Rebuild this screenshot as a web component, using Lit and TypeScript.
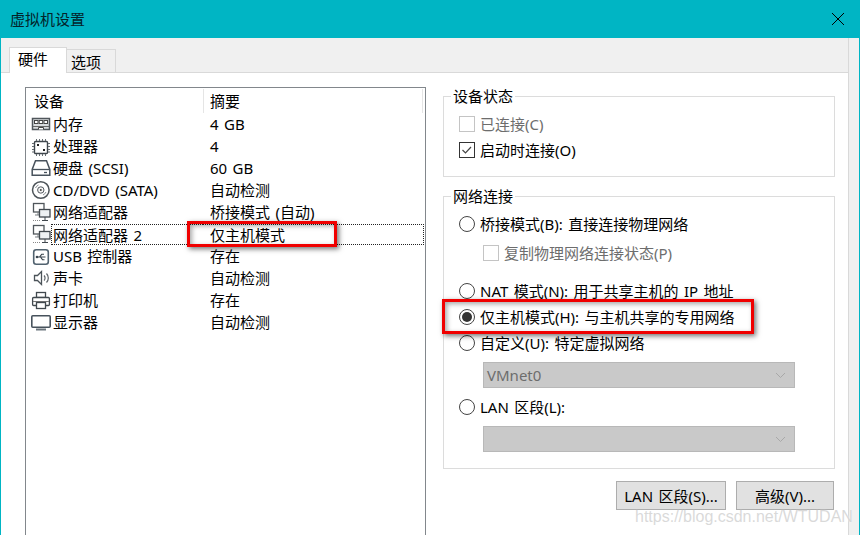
import { LitElement, html, css, svg } from "lit";
import { customElement } from "lit/decorators.js";

const ICONS: Record<string, unknown> = {
  mem: svg`<rect x="1.5" y="4.5" width="17" height="11" fill="#d9dcde" stroke="#50565b" stroke-width="1.5"/><rect x="3.5" y="6.5" width="3.5" height="3" fill="#fff" stroke="#444"/><rect x="8.2" y="6.5" width="3.5" height="3" fill="#fff" stroke="#444"/><rect x="13" y="6.5" width="3.5" height="3" fill="#fff" stroke="#444"/><path d="M2 12.5h16" stroke="#666"/><path d="M7.5 15.5v-2h5v2" fill="#fff" stroke="#444"/>`,
  cpu: svg`<rect x="3.5" y="5.5" width="13" height="12" rx="1" fill="#fff" stroke="#3f464c" stroke-width="1.4"/><path d="M5.5 3v2M8.5 3v2M11.5 3v2M14.5 3v2M5.5 18v2M8.5 18v2M11.5 18v2M14.5 18v2M1 7.5h2M1 10.5h2M1 13.5h2M1 16h2M17 7.5h2M17 10.5h2M17 13.5h2M17 16h2" stroke="#666c71"/><rect x="6" y="8" width="2" height="2" fill="#222"/><rect x="12" y="13" width="2" height="2" fill="#222"/>`,
  hdd: svg`<path d="M4.5 2.8h11l3.3 8.7v5.7H1.2v-5.7z" fill="#fff" stroke="#48525c" stroke-width="1.5"/><path d="M1.5 11.5h17" stroke="#48525c" stroke-width="1.3"/><path d="M13 14.5h3" stroke="#48525c" stroke-width="1.3"/>`,
  cd: svg`<circle cx="9.8" cy="10" r="8.3" fill="#fff" stroke="#4d5459" stroke-width="1.5"/><circle cx="9.8" cy="10" r="3.2" fill="#f4f4f4" stroke="#555b61"/><circle cx="9.8" cy="10" r="1" fill="#444"/><path d="M4.5 8a5.8 5.8 0 0 1 3-3M15 12a5.8 5.8 0 0 1-3 3" fill="none" stroke="#888e93"/>`,
  net: svg`<rect x="2.5" y="1.5" width="10.5" height="8.5" fill="#fff" stroke="#50565b" stroke-width="1.3"/><path d="M7 10v3M4 13h5" stroke="#777c81"/><rect x="8.5" y="7.5" width="10.5" height="7.5" fill="#eef1f3" stroke="#41484e" stroke-width="1.3"/><path d="M14 15v3.5M11 18.5h6" stroke="#41484e"/><path d="M2 18.5h7" stroke="#888" stroke-dasharray="1 1"/>`,
  usb: svg`<rect x="2.7" y="3.7" width="14.6" height="14.6" rx="2.5" fill="#fff" stroke="#51626f" stroke-width="1.6"/><path d="M5.5 11h9M8.5 11l2.2-2.7h2.3M9.5 11l2 2.7h2" fill="none" stroke="#3a454e" stroke-width="1.1"/><circle cx="6" cy="11" r="1.3" fill="#3a454e"/>`,
  snd: svg`<path d="M3.5 7.5h3l4-4v13l-4-4h-3z" fill="#fff" stroke="#4b5359" stroke-width="1.3"/><path d="M13 7.5a3.5 3.5 0 0 1 0 5M15.5 5.5a6.5 6.5 0 0 1 0 9" fill="none" stroke="#5d6368" stroke-width="1.2"/>`,
  prn: svg`<rect x="5.5" y="2.5" width="9" height="5" fill="#fff" stroke="#41484e" stroke-width="1.3"/><path d="M5 15.5H2.6a1 1 0 0 1-1-1V8.5a1 1 0 0 1 1-1h14.8a1 1 0 0 1 1 1v6a1 1 0 0 1-1 1H15" fill="#fff" stroke="#41484e" stroke-width="1.3"/><path d="M2 11.5h16" stroke="#777"/><rect x="5.5" y="12.5" width="9" height="6" fill="#fff" stroke="#41484e" stroke-width="1.3"/>`,
  mon: svg`<rect x="0.8" y="3.8" width="18.4" height="11.4" rx="1" fill="#fff" stroke="#47525c" stroke-width="1.6"/><path d="M5 17.5h10" stroke="#6c767e" stroke-width="2"/>`,
};

const DEVICES = [
  ["mem", "内存", "4 GB"],
  ["cpu", "处理器", "4"],
  ["hdd", "硬盘 (SCSI)", "60 GB"],
  ["cd", "CD/DVD (SATA)", "自动检测"],
  ["net", "网络适配器", "桥接模式 (自动)"],
  ["net", "网络适配器 2", "仅主机模式"],
  ["usb", "USB 控制器", "存在"],
  ["snd", "声卡", "自动检测"],
  ["prn", "打印机", "存在"],
  ["mon", "显示器", "自动检测"],
];

@customElement("app-root")
export class AppRoot extends LitElement {
  static styles = css`
    :host {
      display: block;
      position: relative;
      width: 860px;
      height: 535px;
      overflow: hidden;
      background: #fff;
      font: 15px/20px "Noto Sans", "Noto Sans CJK SC", sans-serif;
      word-spacing: 1.5px;
      color: #000;
    }
    .window { display: flex; flex-direction: column; height: 535px; border: solid #00b5c4; border-width: 0 1px; box-sizing: border-box; }
    .title { flex: 0 0 38px; margin: 0 -1px; padding-left: 10px; background: #00b5c4; display: flex; align-items: center; justify-content: space-between; color: #04242a; }
    .close { width: 14px; height: 14px; margin-right: 15px; }
    .body { flex: 1; display: flex; min-height: 0; }
    .main { flex: 1; display: flex; flex-direction: column; min-width: 0; }
    .side { flex: 0 0 11px; box-sizing: border-box; background: #f0f0f0; border-left: 1px solid #d9d9d9; }
    .tabs { flex: 0 0 35px; box-sizing: border-box; background: #f0f0f0; border-bottom: 1px solid #d9d9d9; display: flex; align-items: flex-end; padding-left: 8px; margin-right: -1px; }
    .tab { box-sizing: border-box; margin-bottom: -1px; border: 1px solid #d9d9d9; }
    .tab.on { width: 58px; height: 26px; background: #fff; border-bottom: 0; line-height: 22px; padding-left: 8px; }
    .tab.off { width: 50px; height: 24px; margin-left: -1px; border-left: 0; line-height: 24px; padding-left: 5px; }
    .content { flex: 1; display: flex; min-height: 0; padding: 14px 13px 0 24px; gap: 17px; }
    .list { flex: 0 0 401px; box-sizing: border-box; border: 1px solid #82878c; border-bottom: 0; }
    .head { height: 25px; display: grid; grid-template-columns: 177px 1fr; padding-top: 1px; box-sizing: border-box; }
    .head span { display: block; padding-left: 8px; line-height: 24px; }
    .head span + span { border-left: 1px solid #e5e5e5; border-right: 1px solid #e5e5e5; padding-left: 6px; margin-right: 2px; }
    .row { height: 22px; display: grid; grid-template-columns: 25px 152px 1fr; align-items: center; line-height: 22px; }
    .row svg { width: 20px; height: 20px; margin-left: 5px; display: block; }
    .name, .sum { white-space: nowrap; }
    .name { padding-left: 2px; }
    .sum { padding-left: 7px; }
    .row.sel .name, .row.sel .sum { height: 21px; line-height: 20px; box-sizing: border-box; border-top: 1px dotted #222; border-bottom: 1px dotted #222; }
    .row.sel .name { border-left: 1px dotted #222; padding-left: 1px; }
    .row.sel .sum { border-right: 1px dotted #222; margin-right: 1px; }
    .right { flex: 1; display: flex; flex-direction: column; margin-top: -1px; }
    fieldset { margin: 0; padding: 0 0 0 15px; border: 1px solid #dcdcdc; min-width: 0; box-sizing: border-box; }
    legend { padding: 0 2px; margin-left: -8px; line-height: 20px; }
    .status { height: 91px; margin-bottom: 9px; }
    .netg { height: 283px; }
    .stack { display: flex; flex-direction: column; padding-top: 5px; }
    .opt { height: 26px; display: flex; align-items: center; gap: 5px; white-space: nowrap; }
    .off-text { color: #6d6d6d; }
    .box { width: 16px; height: 16px; flex: none; box-sizing: border-box; border: 1px solid #333; background: #fff; display: block; }
    .box.dis { border-color: #c4c4c4; }
    .radio { width: 16px; height: 16px; flex: none; box-sizing: border-box; border: 1px solid #444; border-radius: 50%; background: #fff; display: grid; place-items: center; }
    .radio i { width: 10px; height: 10px; border-radius: 50%; background: #333; }
    .sub { padding-left: 24px; margin-top: 3px; }
    .combo { margin-left: 24px; width: 312px; height: 26px; box-sizing: border-box; background: #c9c9c9; border: 1px solid #b8b8b8; display: flex; align-items: center; justify-content: space-between; padding: 0 8px 0 3px; color: #6d6d6d; }
    .combo svg { width: 11px; height: 7px; }
    .gap-a { height: 12px; }
    .gap-b { height: 6px; }
    .buttons { display: flex; justify-content: flex-end; gap: 10px; margin: 12px 1px 0 0; }
    .btn { height: 29px; box-sizing: border-box; background: #e1e1e1; border: 1px solid #adadad; display: grid; place-items: center; white-space: nowrap; }
    .btn.a { width: 110px; }
    .btn.b { width: 98px; }
    .mark { position: absolute; border: 3px solid #f00000; box-sizing: border-box; box-shadow: 2px 2px 5px rgba(0,0,0,.55), inset 2px 2px 5px rgba(0,0,0,.35); pointer-events: none; }
    .mark.m1 { left: 187px; top: 221px; width: 150px; height: 26px; }
    .mark.m2 { left: 442px; top: 299px; width: 312px; height: 35px; }
    .wm { position: absolute; left: 635px; top: 507px; font: 16px/20px "Liberation Sans", sans-serif; word-spacing: 0; color: rgba(205,205,205,.75); text-shadow: 0 0 1px rgba(255,255,255,.9); white-space: nowrap; }
  `;

  private chevron() {
    return html`<svg viewBox="0 0 11 7"><path d="M1 1l4.5 4.5L10 1" fill="none" stroke="#a8a8a8"/></svg>`;
  }

  render() {
    return html`
      <div class="window">
        <div class="title">
          <span>虚拟机设置</span>
          <svg class="close" viewBox="0 0 14 14"><path d="M1 1l12 12M13 1L1 13" stroke="#000" fill="none"/></svg>
        </div>
        <div class="body">
          <div class="main">
            <div class="tabs">
              <div class="tab on">硬件</div>
              <div class="tab off">选项</div>
            </div>
            <div class="content">
              <div class="list">
                <div class="head"><span>设备</span><span>摘要</span></div>
                ${DEVICES.map(
                  ([icon, name, sum], i) => html`
                    <div class="row ${i === 5 ? "sel" : ""}">
                      <svg viewBox="0 0 20 20">${ICONS[icon]}</svg>
                      <div class="name">${name}</div>
                      <div class="sum">${sum}</div>
                    </div>`
                )}
              </div>
              <div class="right">
                <fieldset class="status">
                  <legend>设备状态</legend>
                  <div class="stack">
                    <div class="opt off-text"><span class="box dis"></span>已连接(C)</div>
                    <div class="opt">
                      <svg class="box" viewBox="0 0 14 14"><path d="M2.5 7l3 3L11 4" fill="none" stroke="#444" stroke-width="1.2"/></svg>启动时连接(O)
                    </div>
                  </div>
                </fieldset>
                <fieldset class="netg">
                  <legend>网络连接</legend>
                  <div class="stack">
                    <div class="opt"><span class="radio"></span>桥接模式(B): 直接连接物理网络</div>
                    <div class="opt sub off-text"><span class="box dis"></span>复制物理网络连接状态(P)</div>
                    <div class="gap-a"></div>
                    <div class="opt"><span class="radio"></span>NAT 模式(N): 用于共享主机的 IP 地址</div>
                    <div class="opt"><span class="radio"><i></i></span>仅主机模式(H): 与主机共享的专用网络</div>
                    <div class="opt"><span class="radio"></span>自定义(U): 特定虚拟网络</div>
                    <div class="gap-b"></div>
                    <div class="combo"><span>VMnet0</span>${this.chevron()}</div>
                    <div class="gap-b"></div>
                    <div class="opt"><span class="radio"></span>LAN 区段(L):</div>
                    <div class="gap-b"></div>
                    <div class="combo"><span></span>${this.chevron()}</div>
                  </div>
                </fieldset>
                <div class="buttons">
                  <div class="btn a">LAN 区段(S)...</div>
                  <div class="btn b">高级(V)...</div>
                </div>
              </div>
            </div>
          </div>
          <div class="side"></div>
        </div>
      </div>
      <div class="mark m1"></div>
      <div class="mark m2"></div>
      <div class="wm">https://blog.csdn.net/WTUDAN</div>
    `;
  }
}
